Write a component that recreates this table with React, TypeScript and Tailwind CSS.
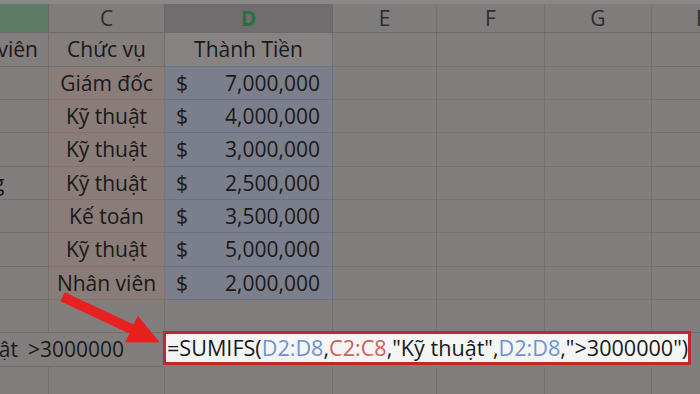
import React from "react";

const font = { fontFamily: '"Open Sans", "Liberation Sans", sans-serif' };

const data = [
  { c: "Giám đốc", d: "7,000,000", h: "h-[33px]" },
  { c: "Kỹ thuật", d: "4,000,000", h: "h-[33px]" },
  { c: "Kỹ thuật", d: "3,000,000", h: "h-[34px]" },
  { c: "Kỹ thuật", d: "2,500,000", h: "h-[33px]" },
  { c: "Kế toán", d: "3,500,000", h: "h-[33px]" },
  { c: "Kỹ thuật", d: "5,000,000", h: "h-[34px]" },
  { c: "Nhân viên", d: "2,000,000", h: "h-[33px]" },
];

function EmptyCells({ last }: { last?: boolean }) {
  const b = last ? "" : "border-b border-[#736f6f]";
  return (
    <>
      <div className={`w-[104px] shrink-0 border-r border-[#767272] ${b}`} />
      <div className={`w-[108px] shrink-0 border-r border-[#767272] ${b}`} />
      <div className={`w-[107px] shrink-0 border-r border-[#767272] ${b}`} />
      <div className={`w-[104px] shrink-0 ${b}`} />
    </>
  );
}

export default function App() {
  return (
    <div
      className="relative w-[700px] h-[394px] overflow-hidden bg-[#827e7d] text-[21px] text-[#1b1919] leading-none"
      style={font}
    >
      {/* top strip */}
      <div className="h-[4px] bg-[#8b8888]" />

      {/* column headers */}
      <div className="flex h-[29px] border-b border-[#6c6969] bg-[#7f7c7c] text-[#2f2c2c]">
        <div className="w-[49px] shrink-0 bg-[#5e7d68] border-r border-[#6c6969]" />
        <div className="w-[116px] shrink-0 flex items-center justify-center border-r border-[#6c6969]">C</div>
        <div className="w-[168px] shrink-0 flex items-center justify-center bg-[#6f6d6e] border-r border-[#6c6969] font-bold text-[#2b6f40]">
          D
        </div>
        <div className="w-[104px] shrink-0 flex items-center justify-center border-r border-[#767272]">E</div>
        <div className="w-[108px] shrink-0 flex items-center justify-center border-r border-[#767272]">F</div>
        <div className="w-[107px] shrink-0 flex items-center justify-center border-r border-[#767272]">G</div>
        <div className="w-[104px] shrink-0 flex items-center pl-[44px]">H</div>
      </div>

      {/* header row */}
      <div className="flex h-[34px]">
        <div className="w-[49px] shrink-0 flex items-center justify-end pr-[10px] overflow-hidden whitespace-nowrap border-r border-b border-[#736f6f]">
          Nhân viên
        </div>
        <div className="w-[116px] shrink-0 flex items-center justify-center border-r border-b border-[#736f6f] bg-[#847e7d]">
          Chức vụ
        </div>
        <div className="w-[168px] shrink-0 flex items-center justify-center bg-[#878383] border-r border-b border-[#6f7386]">
          Thành Tiền
        </div>
        <EmptyCells />
      </div>

      {/* data rows */}
      {data.map((r, i) => (
        <div key={i} className={`flex ${r.h}`}>
          <div className="w-[49px] shrink-0 flex items-center overflow-hidden whitespace-nowrap border-r border-b border-[#736f6f]">
            {i === 3 ? <span className="-ml-[7px]">g</span> : null}
          </div>
          <div className="w-[116px] shrink-0 flex items-center justify-center whitespace-nowrap bg-[#897c79] border-r border-b border-[#88706d]">
            {r.c}
          </div>
          <div className="w-[168px] shrink-0 flex items-center justify-between pl-[11px] pr-[12px] bg-[#7b7f8b] border-r border-b border-[#6b7085]">
            <span>$</span>
            <span>{r.d}</span>
          </div>
          <EmptyCells />
        </div>
      ))}

      {/* empty row */}
      <div className="flex h-[33px]">
        <div className="w-[49px] shrink-0 border-r border-b border-[#736f6f]" />
        <div className="w-[116px] shrink-0 border-r border-b border-[#736f6f]" />
        <div className="w-[168px] shrink-0 border-r border-b border-[#736f6f]" />
        <EmptyCells />
      </div>

      {/* criteria + formula row */}
      <div className="flex h-[34px]">
        <div className="w-[163px] shrink-0 flex items-center whitespace-nowrap border-b border-[#736f6f]">
          <span className="w-[28px] shrink-0 flex justify-end pr-[10px] overflow-hidden">thuật</span>
          <span>&gt;3000000</span>
        </div>
        <div className="w-[528px] h-[34px] shrink-0 -mt-[2px] flex items-center overflow-hidden whitespace-nowrap border-[3px] border-[#c1282d] bg-[#f5f5f5] pl-[1px] text-[21.6px] text-[#1a1a1a]">
          <span>=SUMIFS(</span>
          <span className="text-[#6e93cf]">D2:D8</span>
          <span>,</span>
          <span className="text-[#cf5f5b]">C2:C8</span>
          <span>,"Kỹ thuật",</span>
          <span className="text-[#6e93cf]">D2:D8</span>
          <span>,"&gt;3000000")</span>
        </div>
      </div>

      {/* last row */}
      <div className="flex h-[27px]">
        <div className="w-[49px] shrink-0 border-r border-[#736f6f]" />
        <div className="w-[116px] shrink-0 border-r border-[#736f6f]" />
        <div className="w-[168px] shrink-0 border-r border-[#736f6f]" />
        <EmptyCells last />
      </div>

      {/* arrow */}
      <svg className="absolute left-0 top-0 pointer-events-none" width="700" height="394" viewBox="0 0 700 394">
        <polygon
          points="64.9,292.9 133.8,325.1 137.9,316.5 159,342 125.9,341.9 130.0,333.3 61.1,301.1"
          fill="#e8201f"
          stroke="#e8201f"
          strokeWidth="1"
          strokeLinejoin="round"
        />
      </svg>
    </div>
  );
}
